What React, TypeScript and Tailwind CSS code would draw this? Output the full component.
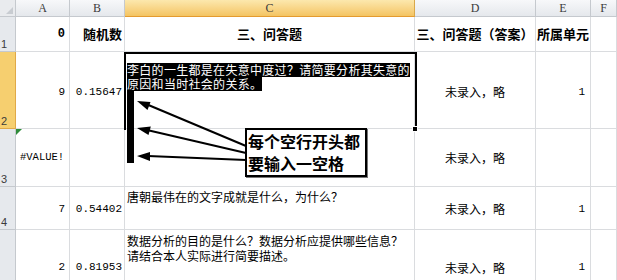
const cjk = "font-['Noto_Sans_CJK_SC','Noto_Sans',sans-serif]";
const mono = "font-['Liberation_Mono','Noto_Sans_CJK_SC',monospace]";
const cell = "border-r border-b border-[#dadcdf] bg-white overflow-visible whitespace-nowrap";

function ColHead({ label, active }: { label: string; active?: boolean }) {
  return (
    <div
      className={
        "flex items-center justify-center border-r border-b font-['Liberation_Serif',serif] text-[12px] text-[#3b3b3b] " +
        (active
          ? "bg-gradient-to-b from-[#fce8ad] to-[#f4c461] border-r-[#d9a84a] border-b-[#e49b2f]"
          : "bg-gradient-to-b from-[#f7f8fa] to-[#e5e8ec] border-[#c5c9ce]")
      }
    >
      {label}
    </div>
  );
}

function RowHead({ n, active }: { n?: string; active?: boolean }) {
  return (
    <div
      className={
        "flex items-end pl-[1px] pb-[1px] border-r border-b font-['Liberation_Sans',sans-serif] text-[11px] leading-none text-[#3b3b3b] " +
        (active ? "bg-[#f6cf6f] border-[#e0a948]" : "bg-[#e6e9ed] border-[#c5c9ce]")
      }
    >
      {n}
    </div>
  );
}

export default function App() {
  return (
    <div className="relative w-[617px] h-[280px] overflow-hidden bg-white text-black">
      <div className="grid grid-cols-[16px_54px_55px_290px_121px_55px_1fr] grid-rows-[17px_35px_77px_58px_43px_76px]">
        {/* header row */}
        <div className="relative border-r border-b border-[#c5c9ce] bg-[#e9ebee]">
          <div className="absolute right-[2px] bottom-[2px] w-0 h-0 border-l-[7px] border-l-transparent border-b-[7px] border-b-[#c8ccd1]" />
        </div>
        <ColHead label="A" />
        <ColHead label="B" />
        <ColHead label="C" active />
        <ColHead label="D" />
        <ColHead label="E" />
        <ColHead label="F" />

        {/* row 1 */}
        <RowHead n="1" />
        <div className={`${cell} flex items-center justify-end pr-[4px] ${mono} text-[12px] font-bold`}>0</div>
        <div className={`${cell} flex items-center justify-end pr-[2px] ${cjk} text-[13px] font-bold`}>随机数</div>
        <div className={`${cell} flex items-center justify-center ${cjk} text-[13px] font-bold`}>三、问答题</div>
        <div className={`${cell} flex items-center justify-center ${cjk} text-[13px] font-bold`}>三、问答题（答案）</div>
        <div className={`${cell} flex items-center justify-center ${cjk} text-[13px] font-bold`}>所属单元</div>
        <div className={cell} />

        {/* row 2 */}
        <RowHead n="2" active />
        <div className={`${cell} flex items-center justify-end pr-[4px] pt-[4px] ${mono} text-[11px]`}>9</div>
        <div className={`${cell} flex items-center justify-end pr-[2px] pt-[4px] ${mono} text-[11px]`}>0.15647</div>
        <div className={`${cell} flex flex-col items-start pt-[11px] pl-[2px] ${cjk} text-[12px] tracking-[0.3px] leading-[14px]`}>
          <span className="block h-[14px] bg-black text-white">李白的一生都是在失意中度过？请简要分析其失意的</span>
          <span className="block h-[14px] bg-black text-white">原因和当时社会的关系。</span>
        </div>
        <div className={`${cell} flex items-center justify-center pt-[4px] ${cjk} text-[12px]`}>未录入，略</div>
        <div className={`${cell} flex items-center justify-end pr-[5px] pt-[4px] ${mono} text-[11px]`}>1</div>
        <div className={cell} />

        {/* row 3 */}
        <RowHead n="3" />
        <div className={`${cell} relative flex items-center pl-[4px] ${mono} text-[10.5px]`}>
          <div className="absolute left-0 top-0 w-0 h-0 border-t-[6px] border-t-[#2e8b3a] border-r-[6px] border-r-transparent" />
          #VALUE!
        </div>
        <div className={cell} />
        <div className={cell} />
        <div className={`${cell} flex items-center justify-center ${cjk} text-[12px]`}>未录入，略</div>
        <div className={cell} />
        <div className={cell} />

        {/* row 4 */}
        <RowHead n="4" />
        <div className={`${cell} flex items-center justify-end pr-[4px] pt-[2px] ${mono} text-[11px]`}>7</div>
        <div className={`${cell} flex items-center justify-end pr-[2px] pt-[2px] ${mono} text-[11px]`}>0.54402</div>
        <div className={`${cell} pt-[3px] pl-[2px] ${cjk} text-[12px] leading-[14px]`}>唐朝最伟在的文字成就是什么，为什么？</div>
        <div className={`${cell} flex items-center justify-center pt-[2px] ${cjk} text-[12px]`}>未录入，略</div>
        <div className={`${cell} flex items-center justify-end pr-[5px] pt-[2px] ${mono} text-[11px]`}>1</div>
        <div className={cell} />

        {/* row 5 */}
        <RowHead />
        <div className={`${cell} flex items-center justify-end pr-[4px] ${mono} text-[11px]`}>2</div>
        <div className={`${cell} flex items-center justify-end pr-[2px] ${mono} text-[11px]`}>0.81953</div>
        <div className={`${cell} pt-[3px] pl-[2px] ${cjk} text-[12px] leading-[15px]`}>
          数据分析的目的是什么？数据分析应提供哪些信息？
          <br />
          请结合本人实际进行简要描述。
        </div>
        <div className={`${cell} flex items-center justify-center ${cjk} text-[12px]`}>未录入，略</div>
        <div className={`${cell} flex items-center justify-end pr-[5px] ${mono} text-[11px]`}>1</div>
        <div className={cell} />
      </div>

      {/* selection frame on C2 */}
      <div className="absolute left-[124px] top-[52px] w-[293px] h-[78px] border-t-2 border-l-2 border-r-2 border-black pointer-events-none" />
      <div className="absolute left-[412px] top-[126px] w-[6px] h-[6px] bg-black border border-white" />

      {/* indent marker bar */}
      <div className="absolute left-[127px] top-[90px] w-[7px] h-[73px] bg-black" />

      {/* arrows */}
      <svg className="absolute left-0 top-0 pointer-events-none" width="617" height="280" viewBox="0 0 617 280">
        <g stroke="black" strokeWidth="2" fill="none">
          <line x1="146" y1="104" x2="246" y2="146" />
          <line x1="147" y1="130" x2="246" y2="153" />
          <line x1="148" y1="156" x2="246" y2="160" />
        </g>
        <g fill="black">
          <polygon points="137,101 147.5,110 150.5,102" />
          <polygon points="137,128 148.5,135 150.8,126.5" />
          <polygon points="137,156 150,152 150,161" />
        </g>
      </svg>

      {/* callout */}
      <div className={`absolute left-[245px] top-[128px] w-[122px] h-[49px] border-2 border-black bg-white pl-[1px] ${cjk} text-[16px] font-bold leading-[22px] whitespace-nowrap shadow-[1px_1px_0_#777]`}>
        每个空行开头都
        <br />
        要输入一空格
      </div>
    </div>
  );
}
